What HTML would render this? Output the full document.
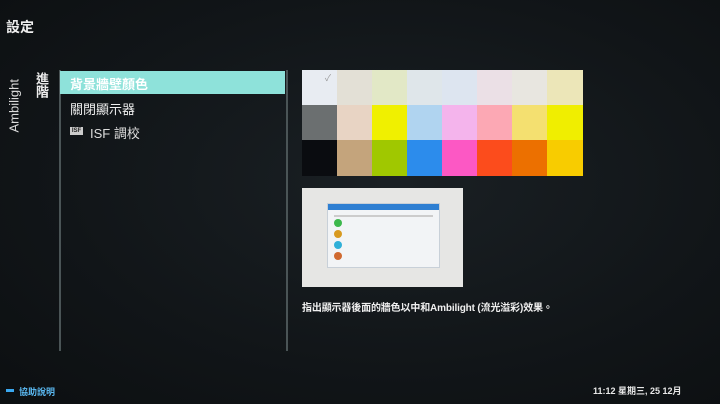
<!DOCTYPE html>
<html><head><meta charset="utf-8"><style>
*{margin:0;padding:0;box-sizing:border-box}
body{width:720px;height:404px;overflow:hidden;background:radial-gradient(ellipse at 55% 45%,#1a2024 0%,#111518 60%,#0c0f11 100%);font-family:"Liberation Sans","Noto Sans CJK TC",sans-serif;color:#e6e6e6;position:relative}
.a{position:absolute}
.cell{position:absolute;width:35px;height:35px}
</style></head><body>
<div class="a" style="left:6px;top:17px;font-size:14px;font-weight:bold;color:#eee">設定</div>
<div class="a" style="left:-17px;top:94px;width:62px;font-size:13px;transform:rotate(-90deg);color:#ddd;white-space:nowrap">Ambilight</div>
<div class="a" style="left:32px;top:72px;font-size:13px;writing-mode:vertical-rl;font-weight:bold;color:#eee">進階</div>
<div class="a" style="left:59px;top:70px;width:2px;height:281px;background:#4a5456"></div>
<div class="a" style="left:286px;top:70px;width:2px;height:281px;background:#4a5456"></div>
<div class="a" style="left:60px;top:71px;width:225px;height:23px;background:#8ee2da"></div>
<div class="a" style="left:70px;top:74px;font-size:13px;color:#fff;font-weight:bold">背景牆壁顏色</div>
<div class="a" style="left:70px;top:99px;font-size:13px;color:#eee">關閉顯示器</div>
<div class="a" style="left:70px;top:127px;width:13px;height:8px;background:#ccc;color:#222;font-size:6px;font-weight:bold;text-align:center;line-height:8px">ISF</div>
<div class="a" style="left:90px;top:123px;font-size:13px;color:#ddd">ISF 調校</div>
<div class="a" style="left:302px;top:188px;width:161px;height:99px;background:#e6e6e4"></div>
<div class="a" style="left:327px;top:203px;width:113px;height:65px;background:#f2f4f6;border:1px solid #c8d0d8">
<div style="height:6px;background:#2e7fd2"></div>
<div style="margin:5px 6px;height:2px;background:#ccc"></div>
<div style="position:absolute;left:6px;top:15px;width:8px;height:8px;border-radius:50%;background:#3cb84c"></div>
<div style="position:absolute;left:6px;top:26px;width:8px;height:8px;border-radius:50%;background:#d89a20"></div>
<div style="position:absolute;left:6px;top:37px;width:8px;height:8px;border-radius:50%;background:#30b0d8"></div>
<div style="position:absolute;left:6px;top:48px;width:8px;height:8px;border-radius:50%;background:#d06a30"></div>
</div>
<div class="a" style="left:302px;top:299px;font-size:10px;font-weight:bold;color:#f0f0f0;letter-spacing:-0.15px">指出顯示器後面的牆色以中和Ambilight (流光溢彩)效果。</div>
<div class="a" style="left:6px;top:389px;width:8px;height:3px;background:#3aa8f0"></div>
<div class="a" style="left:19px;top:385px;font-size:9px;color:#5ab8f0;font-weight:bold">協助說明</div>
<div class="a" style="left:593px;top:384px;font-size:9px;color:#e8e8e8;font-weight:bold">11:12 星期三, 25 12月</div>
<div class="a" style="left:302px;top:70px;width:281px;height:106px">
<div class="cell" style="left:0;top:0;background:#e8ecf2;color:#999;font-size:9px;text-align:right;padding-right:6px;line-height:16px">✓</div>
<div class="cell" style="left:35px;top:0;background:#e3e0d6"></div>
<div class="cell" style="left:70px;top:0;background:#e2e8c6"></div>
<div class="cell" style="left:105px;top:0;background:#dfe6ea"></div>
<div class="cell" style="left:140px;top:0;background:#dde5f0"></div>
<div class="cell" style="left:175px;top:0;background:#ebe0e6"></div>
<div class="cell" style="left:210px;top:0;background:#e8e6e0"></div>
<div class="cell" style="left:245px;top:0;width:36px;background:#ece6b8"></div>
<div class="cell" style="left:0;top:35px;background:#6b6f70"></div>
<div class="cell" style="left:35px;top:35px;background:#e8d4c4"></div>
<div class="cell" style="left:70px;top:35px;background:#f0f000"></div>
<div class="cell" style="left:105px;top:35px;background:#b0d4f0"></div>
<div class="cell" style="left:140px;top:35px;background:#f4b4ec"></div>
<div class="cell" style="left:175px;top:35px;background:#fca8b4"></div>
<div class="cell" style="left:210px;top:35px;background:#f4e070"></div>
<div class="cell" style="left:245px;top:35px;width:36px;background:#f0ee00"></div>
<div class="cell" style="left:0;top:70px;height:36px;background:#0a0c10"></div>
<div class="cell" style="left:35px;top:70px;height:36px;background:#c4a47c"></div>
<div class="cell" style="left:70px;top:70px;height:36px;background:#a0c800"></div>
<div class="cell" style="left:105px;top:70px;height:36px;background:#2c8cec"></div>
<div class="cell" style="left:140px;top:70px;height:36px;background:#fc58c4"></div>
<div class="cell" style="left:175px;top:70px;height:36px;background:#fc4c1c"></div>
<div class="cell" style="left:210px;top:70px;height:36px;background:#ec7000"></div>
<div class="cell" style="left:245px;top:70px;width:36px;height:36px;background:#f8cc00"></div>
</div>
</body></html>
